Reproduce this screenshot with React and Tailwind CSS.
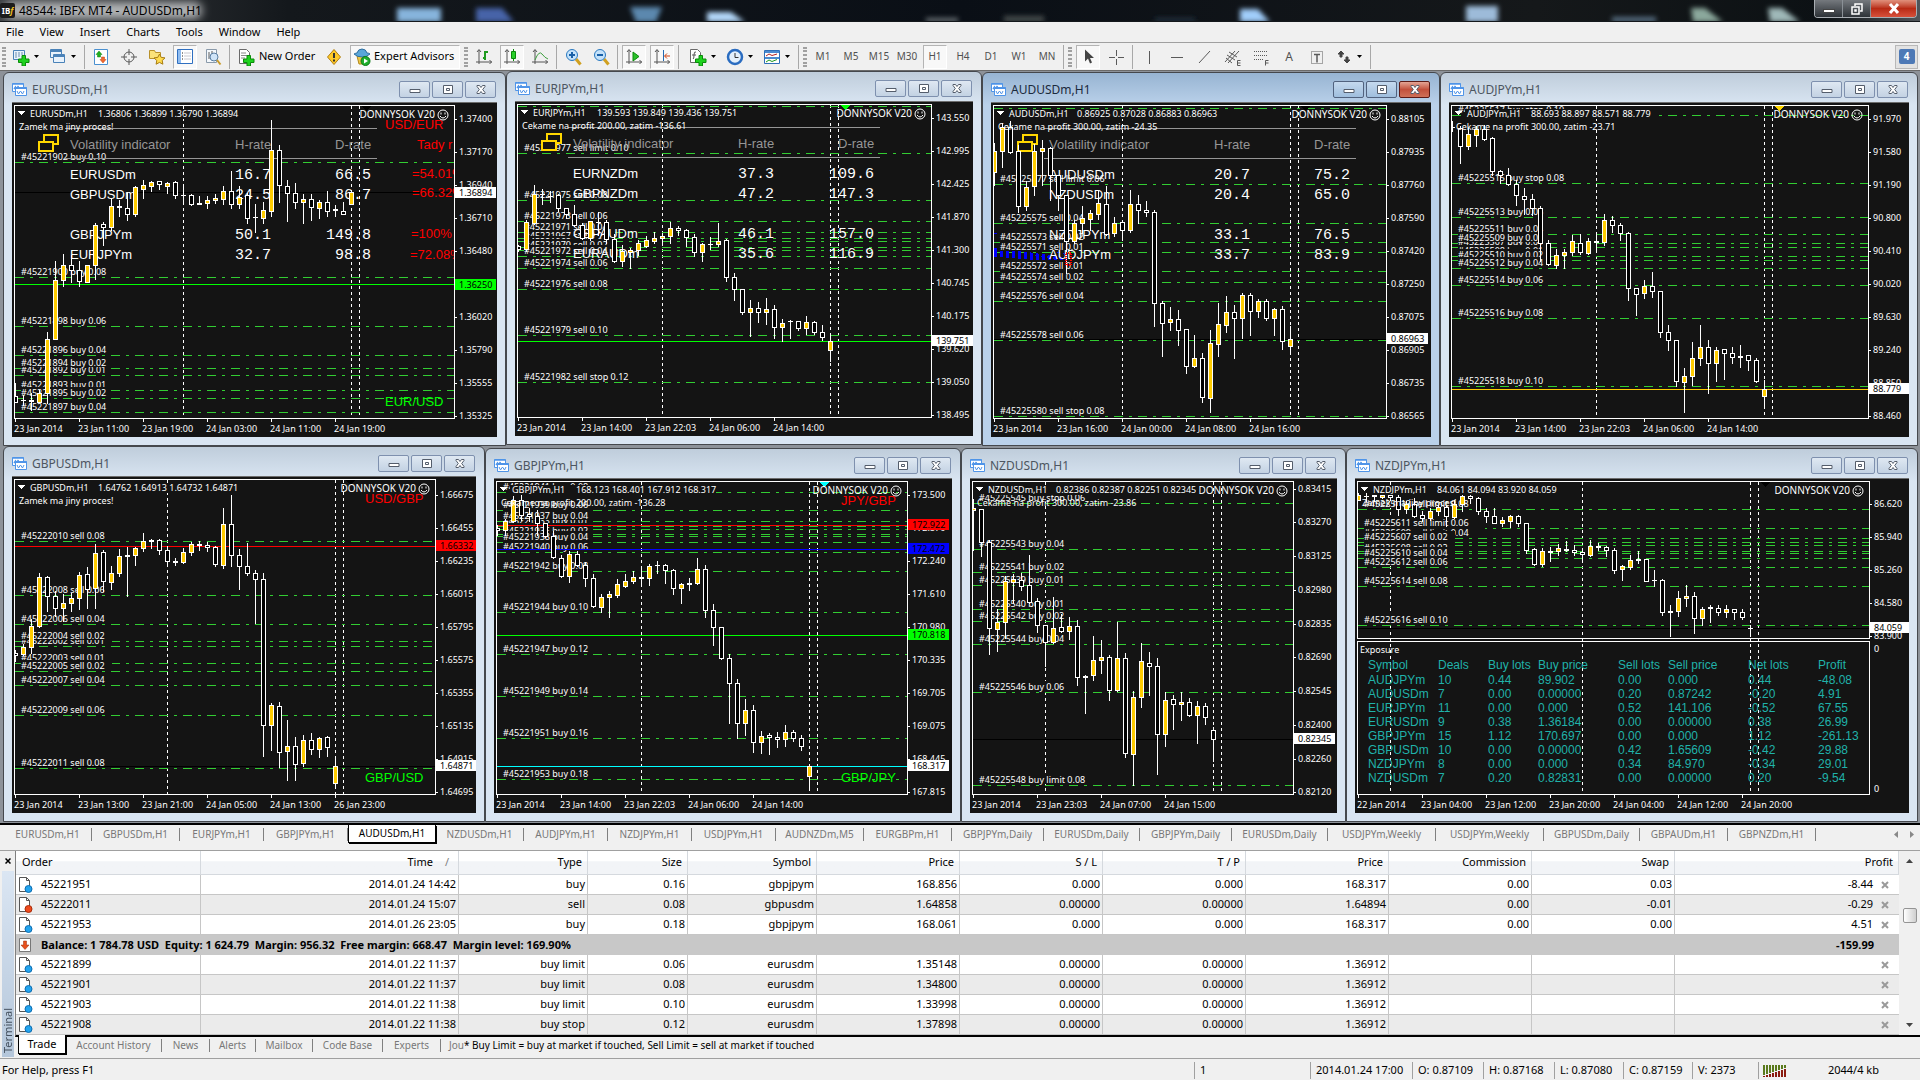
// src/App.jsx
import { useState } from 'react';

const TICKS_PER_PIXEL = 3;
const BAR_STEP = 8;
const FIRST_BAR = 3;

// bars: [high, body top, body bottom, low, rising]
const charts = {
  EURUSD: {
    title: 'EURUSDm,H1',
    quote: '1.36806 1.36899 1.36790 1.36894',
    comment: 'Zamek ma jiny proces!',
    origin: 99, width: 442, bottom: 1048,
    axis: { from: 146, step: 99, labels: ['1.37400', '1.37170', '1.36940', '1.36710', '1.36480', '1.36250', '1.36020', '1.35790', '1.35555', '1.35325'] },
    times: ['23 Jan 2014', '23 Jan 11:00', '23 Jan 19:00', '24 Jan 03:00', '24 Jan 11:00', '24 Jan 19:00'],
    days: [21, 42, 43],
    solid: [[367, '#000000'], [643, '#00ff00']],
    tags: [[366, '1.36894', '#ffffff'], [642, '1.36250', '#00ff00']],
    marker: '#000000',
    levels: [[277, '#45221902 buy 0.10'], [623, '#45221900 buy 0.08'], [769, '#45221898 buy 0.06'], [856, '#45221896 buy 0.04'], [915, '#45221892 buy 0.01'], [895, '#45221894 buy 0.02'], [961, '#45221893 buy 0.01'], [985, '#45221895 buy 0.02'], [1027, '#45221897 buy 0.04']],
    volatility: [['EURUSDm', '16.7', '66.5'], ['GBPUSDm', '24.5', '86.7'], ['GBPJPYm', '50.1', '149.8'], ['EURJPYm', '32.7', '98.8']],
    notes: [
      { x: 373, y: 26, text: 'USD/EUR', color: '#ff0000' },
      { x: 405, y: 46, text: 'Tady r', color: '#ff0000' },
      { x: 400, y: 75, text: '=54.01%', color: '#ff0000' },
      { x: 400, y: 94, text: '=66.32%', color: '#ff0000' },
      { x: 399, y: 135, text: '=100%', color: '#ff0000' },
      { x: 398, y: 156, text: '=72.08%', color: '#ff0000' },
      { x: 373, y: 303, text: 'EUR/USD', color: '#00ff00' },
    ],
    bars: [
      [939, 979, 996, 996, 0], [975, 991, 991, 1005, 0], [970, 991, 993, 1022, 0], [960, 969, 996, 996, 1], [787, 807, 970, 1000, 1],
      [573, 630, 809, 809, 1], [552, 585, 632, 650, 1], [555, 585, 602, 638, 0], [575, 600, 635, 650, 0], [585, 585, 636, 638, 1],
      [459, 465, 586, 627, 1], [457, 462, 472, 525, 0], [386, 408, 473, 480, 1], [390, 410, 411, 440, 0], [368, 415, 434, 452, 0],
      [348, 351, 434, 440, 1], [330, 345, 357, 384, 1], [333, 337, 350, 365, 1], [333, 334, 344, 357, 0], [337, 339, 350, 369, 1],
      [335, 337, 377, 384, 0], [345, 376, 377, 395, 0], [372, 375, 402, 405, 0], [378, 399, 402, 402, 0], [380, 392, 399, 416, 1],
      [372, 385, 392, 399, 1], [350, 363, 387, 402, 1], [303, 364, 404, 414, 0], [348, 382, 404, 416, 1], [370, 377, 446, 461, 0],
      [404, 442, 443, 486, 0], [396, 420, 444, 459, 1], [152, 241, 423, 440, 1], [225, 241, 347, 396, 0], [330, 348, 371, 453, 0],
      [340, 370, 396, 414, 0], [372, 387, 396, 459, 1], [374, 388, 412, 450, 0], [390, 396, 416, 444, 1], [363, 397, 423, 440, 0],
      [405, 418, 422, 438, 0], [396, 423, 432, 432, 0], [363, 366, 404, 404, 1],
    ],
  },
  EURJPY: {
    title: 'EURJPYm,H1',
    quote: '139.593 139.849 139.436 139.751',
    comment: 'Cekame na profit 200.00, zatim -136.61',
    origin: 96, width: 416, bottom: 1045,
    axis: { from: 143, step: 99, labels: ['143.550', '142.995', '142.425', '141.870', '141.300', '140.745', '140.175', '139.620', '139.050', '138.495'] },
    times: ['23 Jan 2014', '23 Jan 14:00', '23 Jan 22:03', '24 Jan 06:00', '24 Jan 14:00'],
    days: [18, 39, 40],
    solid: [[814, '#00ff00']],
    tags: [[812, '139.751', '#ffffff']],
    marker: '#00ff00',
    levels: [[109, ''], [250, '#45221977 sell limit 0.10'], [391, '#45221975 sell 0.08'], [454, '#45221973 sell 0.06'], [505, '#45221969 sell 0.02'], [514, '#45221967 sell 0.01'], [487, '#45221971 sell 0.04'], [532, '#45221968 sell 0.01'], [541, '#45221970 sell 0.02'], [559, '#45221972 sell 0.04'], [595, '#45221974 sell 0.06'], [658, '#45221976 sell 0.08'], [796, '#45221979 sell 0.10'], [937, '#45221982 sell stop 0.12']],
    volatility: [['EURNZDm', '37.3', '109.6'], ['GBPNZDm', '47.2', '147.3'], ['GBPAUDm', '46.1', '157.0'], ['EURAUDm', '35.6', '116.9']],
    bars: [
      [525, 529, 537, 545, 0], [450, 457, 537, 543, 1], [345, 373, 460, 463, 1], [357, 373, 374, 402, 0], [365, 378, 379, 396, 0],
      [372, 375, 415, 423, 0], [414, 415, 432, 446, 0], [405, 432, 467, 470, 0], [460, 467, 505, 508, 0], [453, 454, 505, 510, 1],
      [426, 457, 458, 495, 0], [450, 457, 508, 520, 0], [493, 508, 574, 576, 0], [525, 543, 574, 590, 1], [535, 540, 546, 594, 1],
      [510, 519, 542, 555, 1], [499, 510, 529, 531, 1], [488, 506, 513, 521, 1], [490, 499, 506, 520, 1], [458, 475, 499, 521, 1],
      [470, 475, 482, 495, 0], [478, 480, 503, 528, 0], [492, 502, 547, 560, 0], [520, 522, 547, 573, 1], [503, 523, 524, 537, 0],
      [461, 515, 524, 528, 1], [507, 511, 622, 635, 0], [610, 622, 658, 692, 0], [657, 658, 727, 734, 0], [692, 715, 727, 800, 1],
      [697, 714, 727, 758, 0], [684, 717, 727, 762, 1], [705, 717, 772, 806, 0], [747, 759, 773, 815, 1], [750, 754, 755, 806, 0],
      [753, 754, 776, 782, 0], [738, 757, 775, 792, 1], [754, 757, 788, 792, 0], [765, 786, 803, 810, 0], [795, 813, 842, 873, 1],
    ],
  },
  AUDUSD: {
    title: 'AUDUSDm,H1',
    quote: '0.86925 0.87028 0.86883 0.86963',
    comment: 'Cekame na profit 300.00, zatim -24.35',
    origin: 99, width: 395, bottom: 1048,
    axis: { from: 146, step: 99, labels: ['0.88105', '0.87935', '0.87760', '0.87590', '0.87420', '0.87250', '0.87075', '0.86905', '0.86735', '0.86565'] },
    times: ['23 Jan 2014', '23 Jan 16:00', '24 Jan 00:00', '24 Jan 08:00', '24 Jan 16:00'],
    days: [16, 37, 38],
    solid: [[807, '#000000']],
    tags: [[806, '0.86963', '#ffffff']],
    marker: '#000000',
    trades: true,
    levels: [[115, ''], [343, '#45225577 sell limit 0.06'], [460, '#45225575 sell 0.04'], [517, '#45225573 sell 0.02'], [547, '#45225571 sell 0.01'], [604, '#45225572 sell 0.01'], [637, '#45225574 sell 0.02'], [694, '#45225576 sell 0.04'], [811, '#45225578 sell 0.06'], [1039, '#45225580 sell stop 0.08']],
    volatility: [['AUDUSDm', '20.7', '75.2'], ['NZDUSDm', '20.4', '65.0'], ['NZDJPYm', '33.1', '76.5'], ['AUDJPYm', '33.7', '83.9']],
    bars: [
      [220, 243, 308, 345, 1], [160, 172, 244, 292, 1], [155, 172, 247, 250, 0], [225, 243, 410, 428, 0], [333, 351, 410, 422, 1],
      [222, 243, 350, 375, 1], [210, 236, 245, 345, 1], [233, 236, 317, 390, 0], [315, 316, 375, 420, 0], [375, 376, 515, 610, 0],
      [450, 459, 515, 520, 1], [408, 445, 461, 490, 1], [422, 429, 449, 480, 1], [365, 399, 432, 448, 1], [350, 402, 493, 495, 0],
      [441, 459, 491, 498, 1], [452, 457, 482, 510, 0], [360, 402, 482, 486, 1], [375, 402, 422, 460, 0], [394, 421, 428, 440, 0],
      [420, 427, 701, 768, 0], [694, 700, 761, 858, 0], [711, 748, 758, 782, 1], [720, 748, 781, 825, 0], [777, 778, 890, 909, 0],
      [795, 865, 890, 893, 1], [849, 865, 983, 996, 0], [780, 820, 984, 1026, 1], [699, 763, 822, 860, 1], [678, 727, 765, 786, 1],
      [705, 726, 745, 866, 0], [669, 675, 746, 804, 1], [669, 676, 724, 795, 0], [687, 694, 725, 741, 1], [687, 694, 746, 750, 0],
      [714, 718, 746, 795, 1], [709, 718, 814, 837, 0], [768, 808, 830, 854, 1],
    ],
  },
  AUDJPY: {
    title: 'AUDJPYm,H1',
    quote: '88.693 88.897 88.571 88.779',
    comment: 'Cekame na profit 300.00, zatim -23.71',
    origin: 99, width: 419, bottom: 1048,
    axis: { from: 146, step: 99, labels: ['91.970', '91.580', '91.190', '90.800', '90.410', '90.020', '89.630', '89.240', '88.850', '88.460'] },
    times: ['23 Jan 2014', '23 Jan 14:00', '23 Jan 22:03', '24 Jan 06:00', '24 Jan 14:00'],
    days: [18, 39, 40],
    solid: [[958, '#ffcc00']],
    tags: [[956, '88.779', '#ffffff']],
    marker: '#ffd700',
    levels: [[137, '#45225517 buy stop 0.10'], [340, '#45225515 buy stop 0.08'], [442, '#45225513 buy 0.06'], [493, '#45225511 buy 0.04'], [532, '#45225507 buy 0.01'], [520, '#45225509 buy 0.02'], [559, '#45225508 buy 0.01'], [571, '#45225510 buy 0.02'], [595, '#45225512 buy 0.04'], [646, '#45225514 buy 0.06'], [745, '#45225516 buy 0.08'], [949, '#45225518 buy 0.10']],
    bars: [
      [155, 172, 173, 185, 0], [168, 175, 230, 279, 0], [175, 192, 230, 239, 1], [170, 178, 197, 228, 1], [165, 178, 208, 210, 0],
      [201, 205, 305, 315, 0], [300, 304, 317, 341, 0], [294, 316, 343, 345, 0], [332, 343, 377, 407, 0], [354, 379, 388, 432, 0],
      [372, 388, 416, 437, 0], [410, 415, 521, 575, 0], [510, 519, 584, 587, 0], [537, 556, 587, 594, 1], [538, 547, 557, 594, 1],
      [495, 513, 548, 555, 1], [492, 520, 548, 552, 0], [505, 513, 550, 552, 1], [487, 515, 518, 545, 0], [432, 450, 518, 525, 1],
      [440, 451, 467, 488, 0], [460, 465, 491, 512, 0], [486, 490, 656, 690, 0], [654, 655, 674, 735, 0], [630, 649, 671, 684, 1],
      [606, 650, 665, 681, 0], [663, 664, 788, 803, 0], [765, 788, 812, 840, 0], [810, 811, 935, 948, 0], [895, 919, 937, 1026, 1],
      [816, 865, 920, 946, 1], [765, 832, 866, 885, 1], [810, 832, 881, 969, 0], [832, 841, 881, 933, 1], [837, 838, 850, 927, 0],
      [832, 850, 863, 879, 0], [825, 860, 862, 891, 0], [856, 857, 871, 900, 0], [864, 871, 934, 936, 0], [930, 958, 980, 1014, 1],
    ],
  },
  GBPUSD: {
    title: 'GBPUSDm,H1',
    quote: '1.64762 1.64913 1.64732 1.64871',
    comment: 'Zamek ma jiny proces!',
    origin: 96, width: 423, bottom: 1051,
    axis: { from: 149, step: 99, labels: ['1.66675', '1.66455', '1.66235', '1.66015', '1.65795', '1.65575', '1.65355', '1.65135', '1.64915', '1.64695'] },
    times: ['23 Jan 2014', '23 Jan 13:00', '23 Jan 21:00', '24 Jan 05:00', '24 Jan 13:00', '26 Jan 23:00'],
    days: [19, 40, 41],
    solid: [[304, '#ff0000'], [965, '#000000']],
    tags: [[302, '1.66332', '#ff0000'], [962, '1.64871', '#ffffff']],
    marker: '#000000',
    levels: [[289, '#45222010 sell 0.08'], [451, '#45222008 sell 0.06'], [538, '#45222006 sell 0.04'], [604, '#45222002 sell 0.01'], [589, '#45222004 sell 0.02'], [655, '#45222003 sell 0.01'], [679, '#45222005 sell 0.02'], [721, '#45222007 sell 0.04'], [811, '#45222009 sell 0.06'], [970, '#45222011 sell 0.08']],
    notes: [
      { x: 353, y: 26, text: 'USD/GBP', color: '#ff0000' },
      { x: 353, y: 305, text: 'GBP/USD', color: '#00ff00' },
    ],
    bars: [
      [615, 625, 632, 650, 0], [597, 607, 628, 632, 1], [522, 543, 608, 625, 1], [384, 397, 545, 548, 1], [393, 396, 455, 498, 0],
      [438, 455, 491, 513, 0], [447, 475, 491, 530, 1], [444, 460, 475, 498, 1], [381, 391, 461, 492, 1], [366, 388, 433, 489, 0],
      [297, 325, 431, 489, 1], [316, 321, 410, 440, 0], [363, 385, 411, 434, 1], [312, 334, 386, 395, 1], [306, 331, 334, 453, 0],
      [308, 309, 332, 360, 1], [264, 289, 311, 318, 1], [282, 287, 290, 309, 0], [284, 286, 317, 327, 0], [305, 316, 350, 360, 0],
      [340, 350, 352, 362, 0], [310, 322, 353, 356, 1], [291, 297, 323, 332, 1], [290, 299, 301, 315, 0], [291, 301, 307, 320, 0],
      [303, 307, 359, 365, 0], [189, 238, 360, 369, 1], [150, 238, 332, 365, 0], [312, 331, 365, 432, 0], [294, 364, 386, 390, 0],
      [376, 384, 404, 534, 0], [384, 403, 842, 933, 0], [775, 781, 842, 915, 1], [771, 784, 922, 966, 0], [825, 904, 920, 1005, 1],
      [876, 904, 957, 1005, 0], [870, 885, 956, 963, 1], [864, 885, 914, 927, 0], [877, 880, 914, 936, 1], [873, 877, 908, 933, 0],
      [942, 963, 1014, 1028, 1],
    ],
  },
  GBPJPY: {
    title: 'GBPJPYm,H1',
    quote: '168.123 168.401 167.912 168.317',
    comment: 'Cekame na profit 200.00, zatim -136.28',
    origin: 102, width: 413, bottom: 1051,
    axis: { from: 149, step: 99, labels: ['173.500', '172.870', '172.240', '171.610', '170.980', '170.335', '169.705', '169.075', '168.445', '167.815'] },
    times: ['23 Jan 2014', '23 Jan 14:00', '23 Jan 22:03', '24 Jan 06:00', '24 Jan 14:00'],
    days: [18, 39, 40],
    solid: [[241, '#ff0000'], [314, '#0000ff'], [571, '#00ff00'], [964, '#00ffff']],
    tags: [[239, '172.922', '#ff0000'], [311, '172.472', '#0000ff'], [569, '170.818', '#00ff00'], [962, '168.317', '#ffffff']],
    marker: '#00ffff',
    levels: [[142, '#45221941 buy 0.08'], [196, '#45221939 buy 0.06'], [253, '#45221935 buy 0.02'], [244, '#45221933 buy 0.01'], [229, '#45221937 buy 0.04'], [268, '#45221934 buy 0.01'], [274, '#45221936 buy 0.02'], [292, '#45221938 buy 0.04'], [322, '#45221940 buy 0.06'], [379, '#45221942 buy 0.08'], [502, '#45221944 buy 0.10'], [628, '#45221947 buy 0.12'], [754, '#45221949 buy 0.14'], [880, '#45221951 buy 0.16'], [1003, '#45221953 buy 0.18']],
    notes: [
      { x: 347, y: 26, text: 'JPY/GBP', color: '#ff0000' },
      { x: 347, y: 303, text: 'GBP/JPY', color: '#00ff00' },
    ],
    bars: [
      [240, 249, 256, 272, 0], [222, 229, 257, 270, 1], [155, 167, 230, 233, 1], [150, 167, 210, 225, 0], [190, 209, 215, 230, 0],
      [195, 213, 236, 270, 0], [234, 235, 274, 276, 0], [259, 274, 338, 340, 0], [330, 340, 395, 397, 0], [320, 328, 395, 413, 1],
      [320, 328, 361, 364, 0], [352, 360, 401, 425, 0], [387, 400, 485, 487, 0], [447, 457, 487, 501, 1], [438, 448, 458, 516, 1],
      [402, 418, 450, 458, 1], [387, 408, 425, 428, 1], [378, 397, 408, 416, 1], [363, 398, 401, 420, 0], [357, 363, 401, 422, 1],
      [350, 361, 362, 384, 0], [358, 361, 376, 414, 0], [373, 376, 430, 447, 0], [414, 418, 431, 474, 1], [399, 415, 417, 435, 0],
      [339, 373, 416, 419, 1], [360, 374, 497, 518, 0], [477, 496, 547, 600, 0], [546, 547, 641, 644, 0], [627, 640, 716, 834, 0],
      [702, 715, 836, 881, 0], [762, 796, 836, 870, 1], [780, 796, 893, 923, 0], [858, 873, 893, 924, 1], [864, 871, 878, 927, 0],
      [862, 877, 884, 906, 0], [840, 862, 884, 903, 1], [856, 862, 880, 890, 0], [870, 880, 905, 917, 0], [962, 963, 995, 1035, 1],
    ],
  },
  NZDUSD: {
    title: 'NZDUSDm,H1',
    quote: '0.82386 0.82387 0.82251 0.82345',
    comment: 'Cekame na profit 300.00, zatim -23.86',
    origin: 102, width: 323, bottom: 1051,
    axis: { from: 129, step: 101.3, labels: ['0.83415', '0.83270', '0.83125', '0.82980', '0.82835', '0.82690', '0.82545', '0.82400', '0.82260', '0.82120'] },
    times: ['23 Jan 2014', '23 Jan 23:03', '24 Jan 07:00', '24 Jan 15:00'],
    days: [9, 30, 31],
    solid: [[884, '#000000']],
    tags: [[881, '0.82345', '#ffffff']],
    marker: '#000000',
    levels: [[175, '#45225545 buy stop 0.06'], [313, '#45225543 buy 0.04'], [382, '#45225541 buy 0.02'], [421, '#45225539 buy 0.01'], [493, '#45225540 buy 0.01'], [529, '#45225542 buy 0.02'], [598, '#45225544 buy 0.04'], [742, '#45225546 buy 0.06'], [1021, '#45225548 buy limit 0.08']],
    bars: [
      [162, 190, 197, 317, 1], [192, 193, 293, 335, 0], [285, 292, 551, 627, 0], [492, 531, 554, 620, 1], [395, 409, 533, 580, 1],
      [388, 404, 412, 475, 1], [384, 405, 425, 437, 0], [330, 420, 472, 476, 0], [459, 468, 542, 563, 0], [540, 541, 593, 663, 0],
      [456, 549, 593, 595, 1], [507, 548, 559, 562, 0], [516, 544, 559, 582, 1], [525, 543, 698, 720, 0], [690, 694, 697, 806, 0],
      [573, 645, 692, 705, 1], [585, 637, 647, 686, 1], [630, 636, 737, 765, 0], [531, 640, 735, 738, 1], [624, 639, 926, 936, 0],
      [738, 756, 929, 1021, 1], [594, 648, 758, 786, 1], [621, 654, 665, 750, 0], [639, 663, 869, 987, 0], [741, 766, 869, 903, 1],
      [750, 763, 779, 852, 0], [741, 771, 779, 825, 1], [759, 771, 812, 813, 0], [768, 783, 812, 894, 1], [774, 783, 818, 837, 0],
      [847, 856, 884, 950, 0],
    ],
  },
  NZDJPY: {
    title: 'NZDJPYm,H1',
    quote: '84.061 84.094 83.920 84.059',
    comment: 'Zamek ma jiny proces!',
    origin: 102, width: 514, bottom: 1051, split: 583,
    axis: { from: 176, step: 99, labels: ['86.620', '85.940', '85.260', '84.580', '83.900'] },
    times: ['22 Jan 2014', '23 Jan 04:00', '23 Jan 12:00', '23 Jan 20:00', '24 Jan 04:00', '24 Jan 12:00', '24 Jan 20:00'],
    days: [4, 28, 49, 50],
    solid: [[550, '#000000']],
    tags: [[548, '84.059', '#ffffff']],
    marker: '#000000',
    levels: [[193, '#45225613 sell limit 0.08'], [280, '#45225609 sell limit 0.04'], [250, '#45225611 sell limit 0.06'], [301, '#45225605 sell 0.01'], [292, '#45225607 sell 0.02'], [319, '#45225606 sell 0.01'], [325, '#45225608 sell 0.02'], [340, '#45225610 sell 0.04'], [367, '#45225612 sell 0.06'], [424, '#45225614 sell 0.08'], [541, '#45225616 sell 0.10']],
    bars: [
      [145, 150, 167, 167, 1], [145, 153, 155, 170, 0], [148, 152, 154, 168, 0], [147, 150, 157, 160, 1], [143, 152, 156, 165, 0],
      [150, 156, 194, 210, 0], [168, 178, 193, 205, 1], [160, 178, 213, 218, 0], [200, 211, 220, 228, 0], [190, 199, 221, 225, 1],
      [180, 187, 200, 210, 1], [183, 187, 215, 245, 0], [165, 178, 217, 220, 1], [150, 154, 178, 198, 1], [147, 153, 161, 175, 0],
      [158, 160, 200, 208, 0], [190, 199, 215, 231, 0], [190, 214, 234, 235, 0], [216, 226, 234, 243, 1], [210, 213, 228, 246, 1],
      [212, 214, 236, 244, 0], [234, 235, 315, 325, 0], [310, 313, 359, 360, 0], [309, 318, 359, 363, 1], [308, 320, 321, 348, 0],
      [297, 310, 318, 330, 1], [288, 313, 317, 320, 0], [300, 316, 323, 330, 0], [320, 322, 329, 345, 0], [285, 303, 330, 335, 1],
      [294, 304, 307, 315, 0], [305, 307, 317, 333, 0], [310, 316, 375, 384, 0], [360, 364, 374, 405, 1], [330, 345, 366, 372, 1],
      [318, 343, 345, 355, 0], [342, 343, 408, 410, 0], [375, 406, 407, 425, 0], [402, 405, 503, 510, 0], [480, 499, 503, 573, 0],
      [438, 460, 500, 513, 1], [420, 453, 461, 483, 1], [441, 453, 521, 564, 0], [486, 492, 521, 540, 1], [482, 487, 490, 531, 0],
      [480, 490, 502, 510, 0], [480, 493, 502, 516, 1], [492, 493, 502, 524, 0], [492, 502, 517, 524, 0], [540, 550, 551, 573, 0],
    ],
  },
};

const exposure = [
  ['AUDJPYm', '10', '0.44', '89.902', '0.00', '0.000', '0.44', '-48.08'],
  ['AUDUSDm', '7', '0.00', '0.00000', '0.20', '0.87242', '-0.20', '4.91'],
  ['EURJPYm', '11', '0.00', '0.000', '0.52', '141.106', '-0.52', '67.55'],
  ['EURUSDm', '9', '0.38', '1.36184', '0.00', '0.00000', '0.38', '26.99'],
  ['GBPJPYm', '15', '1.12', '170.697', '0.00', '0.000', '1.12', '-261.13'],
  ['GBPUSDm', '10', '0.00', '0.00000', '0.42', '1.65609', '-0.42', '29.88'],
  ['NZDJPYm', '8', '0.00', '0.000', '0.34', '84.970', '-0.34', '29.01'],
  ['NZDUSDm', '7', '0.20', '0.82831', '0.00', '0.00000', '0.20', '-9.54'],
];

const chartTabs = [
  ['EURUSDm,H1', 'w-[88px]'], ['GBPUSDm,H1', 'w-[88px]'], ['EURJPYm,H1', 'w-[84px]'], ['GBPJPYm,H1', 'w-[84px]'],
  ['AUDUSDm,H1', 'w-[88px]'], ['NZDUSDm,H1', 'w-[88px]'], ['AUDJPYm,H1', 'w-[84px]'], ['NZDJPYm,H1', 'w-[84px]'],
  ['USDJPYm,H1', 'w-[84px]'], ['AUDNZDm,M5', 'w-[88px]'], ['EURGBPm,H1', 'w-[88px]'], ['GBPJPYm,Daily', 'w-[92px]'],
  ['EURUSDm,Daily', 'w-[96px]'], ['GBPJPYm,Daily', 'w-[92px]'], ['EURUSDm,Daily', 'w-[96px]'], ['USDJPYm,Weekly', 'w-[108px]'],
  ['USDJPYm,Weekly', 'w-[108px]'], ['GBPUSDm,Daily', 'w-[96px]'], ['GBPAUDm,H1', 'w-[88px]'], ['GBPNZDm,H1', 'w-[88px]'],
];

const columns = [
  ['Order', 'w-[185px]'], ['Time', 'w-[258px]'], ['Type', 'w-[129px]'], ['Size', 'w-[100px]'], ['Symbol', 'w-[129px]'], ['Price', 'w-[143px]'],
  ['S / L', 'w-[143px]'], ['T / P', 'w-[143px]'], ['Price', 'w-[143px]'], ['Commission', 'w-[143px]'], ['Swap', 'w-[143px]'], ['Profit', ''],
];

const openOrders = [
  ['45221951', '2014.01.24 14:42', 'buy', '0.16', 'gbpjpym', '168.856', '0.000', '0.000', '168.317', '0.00', '0.03', '-8.44'],
  ['45222011', '2014.01.24 15:07', 'sell', '0.08', 'gbpusdm', '1.64858', '0.00000', '0.00000', '1.64894', '0.00', '-0.01', '-0.29'],
  ['45221953', '2014.01.26 23:05', 'buy', '0.18', 'gbpjpym', '168.061', '0.000', '0.000', '168.317', '0.00', '0.00', '4.51'],
];

const pendingOrders = [
  ['45221899', '2014.01.22 11:37', 'buy limit', '0.06', 'eurusdm', '1.35148', '0.00000', '0.00000', '1.36912', '', '', ''],
  ['45221901', '2014.01.22 11:37', 'buy limit', '0.08', 'eurusdm', '1.34800', '0.00000', '0.00000', '1.36912', '', '', ''],
  ['45221903', '2014.01.22 11:38', 'buy limit', '0.10', 'eurusdm', '1.33998', '0.00000', '0.00000', '1.36912', '', '', ''],
  ['45221908', '2014.01.22 11:38', 'buy stop', '0.12', 'eurusdm', '1.37898', '0.00000', '0.00000', '1.36912', '', '', ''],
];

const Candle = ({ x, high, top, bottom, low, rising }) => (
  <g>
    <rect x={x} y={high} width="1" height={low - high + 1} fill="#fff" />
    <rect x={x - 2} y={top} width="5" height={bottom - top + 1} fill="#fff" />
    {bottom - top > 1 && (
      <rect x={x - 1} y={top + 1} width="3" height={bottom - top - 1} fill={rising ? '#ffcc00' : '#000'} />
    )}
  </g>
);

const Volatility = ({ rows }) => (
  <g className="text-[13px]">
    <g className="fill-[#969696]">
      <rect x="53" y="25" width="312" height="1" />
      <rect x="53" y="55" width="312" height="1" />
      <text x="58" y="46">Volatility indicator</text>
      <text x="223" y="46">H-rate</text>
      <text x="323" y="46">D-rate</text>
    </g>
    <g fill="none" stroke="#ffd700" strokeWidth="2">
      <rect x="32" y="32" width="14" height="9" />
      <rect x="27" y="39" width="14" height="9" fill="#141414" />
    </g>
    {rows.map(([name, hourly, daily], i) => {
      const y = [76, 96, 136, 156][i];
      return (
        <g key={name} className="fill-white">
          <text x="58" y={y}>{name}</text>
          <text x="259" y={y} textAnchor="end" className="font-['Liberation_Mono',monospace] text-[15px]">{hourly}</text>
          <text x="359" y={y} textAnchor="end" className="font-['Liberation_Mono',monospace] text-[15px]">{daily}</text>
        </g>
      );
    })}
  </g>
);

const Chart = ({ chart }) => {
  const { width, axis } = chart;
  const toPixel = (tick) => Math.floor((tick - chart.origin) / TICKS_PER_PIXEL);
  const barX = (index) => FIRST_BAR + index * BAR_STEP;
  const bottom = toPixel(chart.bottom);
  const split = chart.split ? toPixel(chart.split) : bottom;
  const lastDay = barX(chart.days[chart.days.length - 1]);
  const quoteX = chart.title.includes('JPY') ? 82 : 86;
  const clipId = `clip-${chart.title.slice(0, 6)}`;

  return (
    <svg className="block h-full w-full fill-white font-['Liberation_Sans',Arial,sans-serif]" role="img" aria-label={chart.title} shapeRendering="crispEdges">
      <clipPath id={clipId}>
        <rect x="2" y="2" width={width - 2} height={bottom} />
      </clipPath>
      <g clipPath={`url(#${clipId})`}>
        {chart.days.map((day) => (
          <line key={day} x1={barX(day) + 0.5} x2={barX(day) + 0.5} y1="3" y2={bottom} stroke="#fff" strokeDasharray="3 3" />
        ))}
        {chart.levels.map(([tick]) => (
          <line key={tick} x1="3" x2={width} y1={toPixel(tick) + 0.5} y2={toPixel(tick) + 0.5} stroke="#32cd32" strokeDasharray="9 6 3 6" />
        ))}
        {chart.trades && (
          <g stroke="#0000ff" fill="none">
            <path d="M3 130 L76 152" strokeDasharray="3 3" />
            <path d="M3 146 L76 156 M3 149 L76 157 M3 152 L76 158" strokeWidth="3" strokeDasharray="3 3" />
          </g>
        )}
        {chart.levels.filter(([, label]) => label).map(([tick, label]) => (
          <g key={label}>
            <rect x="9" y={toPixel(tick) - 11} width={label.length * 5 - 4} height="10" fill="#141414" />
            <text x="9" y={toPixel(tick) - 2} className="font-['Noto_Sans',sans-serif] text-[9px]">{label}</text>
          </g>
        ))}
        {chart.solid.map(([tick, color]) => (
          <rect key={tick} x="2" y={toPixel(tick)} width={width - 2} height="1" fill={color} />
        ))}
        {chart.volatility && <Volatility rows={chart.volatility} />}
        {chart.bars.map(([high, top, low, end, rising], i) => (
          <Candle key={i} x={barX(i)} high={toPixel(high)} top={toPixel(top)} bottom={toPixel(low)} low={toPixel(end)} rising={rising} />
        ))}
        {chart.trades && <path d="M75 150h5v12h-5z" fill="none" stroke="#ff0000" strokeWidth="2" strokeDasharray="1 1" />}
        {(chart.notes || []).map((note) => (
          <text key={note.text} x={note.x} y={note.y} fill={note.color} className="text-[13px]">{note.text}</text>
        ))}
      </g>

      {/* Frame, split panel and header */}
      <g fill="none" stroke="#fff">
        <rect x="2.5" y="2.5" width={width - 2} height={split - 3} />
        {chart.split && <rect x="2.5" y={split + 2.5} width={width - 2} height={bottom - split - 3} />}
      </g>
      <path d={`M${lastDay + 3} 3h9l-4.5 5z`} fill={chart.marker} />
      <rect x="16" y="6" width={quoteX - 16 + Math.round(chart.quote.length * 4.5)} height="10" fill="#141414" />
      <path d="M6 8h7l-3.500 4z" />
      <g className="font-['Noto_Sans',sans-serif] text-[9px]">
        <text x="18" y="14">{chart.title}</text>
        <text x={quoteX} y="14">{chart.quote}</text>
        <text x="7" y="27">{chart.comment}</text>
        <text x={width - 19} y="15" textAnchor="end" className="text-[10px]">DONNYSOK V20</text>
      </g>
      <g fill="none" stroke="#fff" shapeRendering="geometricPrecision">
        <circle cx={width - 11} cy="12" r="5" />
        <path d={`M${width - 14} 13q3 4 6 0M${width - 13} 9.500v2M${width - 9} 9.500v2`} />
      </g>

      {/* Price axis */}
      <g className="font-['Noto_Sans',sans-serif] text-[9px]">
        {axis.labels.map((label, i) => {
          const y = toPixel(axis.from + axis.step * i);
          return (
            <g key={label}>
              <rect x={width} y={y + 1} width="3" height="1" />
              <text x={width + 5} y={y + 4}>{label}</text>
            </g>
          );
        })}
        {chart.split && <text x={width + 5} y={split + 13}>0</text>}
        {chart.split && <text x={width + 5} y={bottom - 3}>0</text>}
        {chart.tags.map(([tick, label, color]) => (
          <g key={label}>
            <rect x={width + 1} y={toPixel(tick) - 5} width="41" height="11" fill={color} />
            <text x={width + 5} y={toPixel(tick) + 4} className="fill-black">{label}</text>
          </g>
        ))}
        {chart.times.map((time, i) => (
          <g key={time}>
            <rect x={barX(i * 8)} y={bottom} width="1" height="3" />
            <text x={barX(i * 8) - 1} y={bottom + 13}>{time}</text>
          </g>
        ))}
      </g>
    </svg>
  );
};

const ExposureTable = () => (
  <div className="absolute top-[164px] left-[4px] font-['Liberation_Sans',Arial,sans-serif] text-[12px] leading-[14px] text-[#20b2aa]">
    <div className="pl-px font-['Noto_Sans',sans-serif] text-[9px] text-white">Exposure</div>
    <table className="mt-px ml-[9px] table-fixed border-collapse text-left">
      <colgroup>
        <col className="w-[70px]" />
        <col className="w-[50px]" />
        <col className="w-[50px]" />
        <col className="w-[80px]" />
        <col className="w-[50px]" />
        <col className="w-[80px]" />
        <col className="w-[70px]" />
        <col className="w-[48px]" />
      </colgroup>
      <thead>
        <tr>
          {['Symbol', 'Deals', 'Buy lots', 'Buy price', 'Sell lots', 'Sell price', 'Net lots', 'Profit'].map((name) => (
            <th key={name} className="p-0 pb-px font-normal whitespace-nowrap">{name}</th>
          ))}
        </tr>
      </thead>
      <tbody>
        {exposure.map((row) => (
          <tr key={row[0]}>
            {row.map((cell, i) => (
              <td key={i} className="p-0 whitespace-nowrap">{cell}</td>
            ))}
          </tr>
        ))}
      </tbody>
    </table>
  </div>
);

const WindowIcon = () => (
  <svg width="15" height="15" viewBox="0 0 15 15" fill="#fff" stroke="#4f94e8">
    <path d="M.5 1.500h11v8H.5z" />
    <path d="M.5 2h11M2 7l1.500-2 1 2 2-3" strokeWidth="1.500" />
    <path d="M3.500 5.500h11v8h-11z" />
    <path d="M3.500 6h11" strokeWidth="2" />
    <path d="M5 9l1.500 3 2-3 2 3 1.500-3" fill="none" />
  </svg>
);

const frameButton = 'flex h-[17px] w-[31px] items-center justify-center rounded-[2px] border border-[#7e90ae] bg-linear-to-b from-[#dfe8f2] to-[#c3d2e3]';
const frameButtonActive = 'flex h-[17px] w-[31px] items-center justify-center rounded-[2px] border border-[#51627e] bg-linear-to-b from-[#c5d9ee] to-[#9fbedd]';
const closeButtonActive = 'flex h-[17px] w-[31px] items-center justify-center rounded-[2px] border border-[#5c1a16] bg-linear-to-b from-[#e3a495] via-[#c2503c] to-[#cf7058]';

const ChartWindow = ({ chart, active, className, children }) => (
  <section
    className={`flex min-w-0 flex-col overflow-hidden rounded-t-[6px] border border-[#45484d] px-2 pb-2 ${
      active ? 'bg-linear-to-b from-[#97b4d2] to-[#bad1ea] to-[32px]' : 'bg-linear-to-b from-[#bfcddb] to-[#d9e5f2] to-[32px]'
    } ${className}`}
  >
    <header className="flex h-[29px] flex-none items-center gap-1 pt-1 pr-px">
      <WindowIcon />
      <h2 className={`flex-1 pl-px text-[12px] ${active ? 'text-[#1b2a3c]' : 'text-[#4d5661]'}`}>{chart.title}</h2>
      <div className="flex gap-[2px]">
        <button className={active ? frameButtonActive : frameButton} aria-label="Minimize">
          <svg width="12" height="9" viewBox="0 0 12 9"><path d="M1 4.500h10v3H1z" fill="#fff" stroke="#545d6b" /></svg>
        </button>
        <button className={active ? frameButtonActive : frameButton} aria-label="Maximize">
          <svg width="12" height="9" viewBox="0 0 12 9"><path d="M1.500 .5h9v8h-9zM4.500 3.500h3v2h-3z" fill="#fff" stroke="#545d6b" /></svg>
        </button>
        <button className={active ? closeButtonActive : frameButton} aria-label="Close">
          <svg width="12" height="9" viewBox="0 0 12 9"><path d="M2 .5h2.500L6 2.500 7.500.5H10v1L7.700 4.500 10 7.500v1H7.500L6 6.500 4.500 8.500H2v-1l2.300-3L2 1.500z" fill="#fff" stroke="#545d6b" /></svg>
        </button>
      </div>
    </header>
    <div className="relative min-h-0 flex-1 overflow-hidden border-t border-[#6d6d6d] bg-[#141414]">
      <Chart chart={chart} />
      {children}
    </div>
  </section>
);

const Sep = () => <span className="mx-[2px] h-6 w-px flex-none bg-[#a8a8a8]" />;
const Grip = () => <span className="mx-[2px] h-5 w-[4px] flex-none border-x-2 border-dotted border-[#a0a0a0]" />;
const Caret = () => <svg className="flex-none" width="5" height="3" viewBox="0 0 5 3"><path d="M0 0h5L2.500 3z" /></svg>;

const pressed = 'flex h-6 w-[24px] mx-[2px] flex-none items-center justify-center border border-[#b4b4b4] border-r-white border-b-white bg-[#f8f8f8]';
const flat = 'flex h-6 w-[24px] mx-[2px] flex-none items-center justify-center';

const Tool = ({ on, label, children }) => (
  <button className={on ? pressed : flat} aria-label={label} aria-pressed={!!on}>
    <svg width="18" height="18" viewBox="0 0 18 18" fill="none" stroke="#5a5a5a">{children}</svg>
  </button>
);

const MenuTool = ({ label, children }) => (
  <button className="flex h-6 w-[37px] flex-none items-center gap-1 pl-1" aria-label={label}>
    <svg width="18" height="18" viewBox="0 0 18 18" fill="none" stroke="#5a5a5a">{children}</svg>
    <Caret />
  </button>
);

const plus = <path d="M10 7.500h3.500v3.500H17v3.500h-3.500V18H10v-3.500H6.500V11H10z" fill="#1fd21f" stroke="#0a8a0a" />;
const axes = <path d="M4 2v14M1 14h16M2 4l2-2.500L6 4M14.500 12l2 2-2 2" stroke="#555" />;

const Toolbar = () => (
  <div className="flex h-7 items-center overflow-hidden border-t border-[#a0a0a0] bg-[#f0f0f0] text-[11px]">
    <Grip />
    <MenuTool label="New chart">
      <path d="M1.500 2.500h11v9h-11z" fill="#e8f2fc" stroke="#4a82b8" />
      <path d="M4 4v6M7 4v5M10 4v3" stroke="#6b8cae" />
      {plus}
    </MenuTool>
    <MenuTool label="Profiles">
      <path d="M1.500 1.500h11v8h-11z" fill="#e8f2fc" stroke="#4a82b8" />
      <path d="M4.500 6.500h11v8h-11z" fill="#e8f2fc" stroke="#4a82b8" />
      <path d="M2 3h10M5 8h10" stroke="#4a82b8" strokeWidth="2" />
    </MenuTool>
    <Sep />
    <Tool label="Market watch">
      <path d="M2.500 1.500h13v15h-13z" fill="#fff" stroke="#4a90d0" />
      <path d="M7 3l3 3.500H8.500V9h-3V6.500H4z" fill="#1faf1f" stroke="#148014" strokeWidth=".5" />
      <path d="M11 15l3-3.500h-1.500V9h-3v2.500H8z" fill="#f06a30" stroke="#c04010" strokeWidth=".5" />
    </Tool>
    <Tool label="Data window">
      <circle cx="9" cy="9" r="5" />
      <path d="M9 1v6M9 11v6M1 9h6M11 9h6" />
    </Tool>
    <Tool label="Favorites">
      <path d="M1.500 2.500h5l1 2h5v6h-11z" fill="#fbe27a" stroke="#b8912a" />
      <path d="M11.500 6l1.700 3.400 3.800.5-2.800 2.600.7 3.700-3.400-1.800-3.400 1.800.7-3.700L6 9.900l3.800-.5z" fill="#ffdc50" stroke="#a87c10" />
    </Tool>
    <Tool on label="Navigator">
      <path d="M1.500 1.500h15v14h-15z" fill="#fff" stroke="#2f6fc0" />
      <path d="M2 2h3v13H2z" fill="#8fbcf0" stroke="none" />
      <path d="M8 5h7M8 8h7M8 11h7" stroke="#c8c8d0" />
      <path d="M6 5h1M6 8h1M6 11h1" stroke="#222" />
    </Tool>
    <Tool label="Strategy tester">
      <path d="M2.500 1.500h10v13h-10z" fill="#f4f8fc" stroke="#8a9aaa" />
      <path d="M5 4v7M8 3v5" />
      <circle cx="10" cy="9" r="4" fill="#cfe4f8" stroke="#5a7ea2" />
      <path d="M13 12l3.500 4.500" stroke="#c79a2a" strokeWidth="2" />
    </Tool>
    <Sep />
    <button className="flex h-6 w-[88px] flex-none items-center gap-1 pl-[5px] whitespace-nowrap">
      <svg width="18" height="18" viewBox="0 0 18 18" fill="none">
        <path d="M2.500 1.500h7l3 3v11h-10z" fill="#fff" stroke="#6a6a6a" />
        <path d="M4 5h5M4 7.500h6M4 10h4" stroke="#888" />
        {plus}
      </svg>
      New Order
    </button>
    <Tool label="Warnings">
      <path d="M9 1.500L15.500 9 9 16.500 2.500 9z" fill="#ffc928" stroke="#b07d10" />
      <path d="M9 5v5M9 11.500v2" stroke="#333" strokeWidth="2" />
    </Tool>
    <button className="mx-[2px] flex h-6 w-[110px] flex-none items-center gap-[3px] border border-[#b4b4b4] border-r-white border-b-white bg-[#f8f8f8] pl-[2px] whitespace-nowrap" aria-pressed="true">
      <svg className="flex-none" width="18" height="18" viewBox="0 0 18 18">
        <path d="M4 8h9l-2 8H6z" fill="#f0c848" stroke="#b08818" />
        <path d="M1 6q2-1 3-1 1-4 5-4t5 4q2 0 3 1-3 3-8 3T1 6z" fill="#5aa6d8" stroke="#2f6e9e" />
        <circle cx="12.500" cy="13" r="4.500" fill="#1fae2c" stroke="#0c7a16" />
        <path d="M11 10.500v5l4-2.500z" fill="#fff" />
      </svg>
      Expert Advisors
    </button>
    <Grip />
    <Tool label="Bar chart">{axes}<path d="M10 3v9M8 10h2M10 4h3" stroke="#1f9a1f" strokeWidth="2" /></Tool>
    <Tool on label="Candlesticks">{axes}<path d="M10.500 1v12" stroke="#0a8a0a" /><path d="M8.500 3.500h4v7h-4z" fill="#2ad02a" stroke="#0a8a0a" /></Tool>
    <Tool label="Line chart">{axes}<path d="M4 12Q8 2 11 6t6 5" stroke="#3fa03f" /></Tool>
    <Sep />
    <Tool label="Zoom in">
      <path d="M12 11l4.500 5.500" stroke="#d0a020" strokeWidth="3" /><circle cx="8" cy="7" r="5.500" fill="#c4e2fa" stroke="#2878c0" /><path d="M5 7h6M8 4v6" stroke="#1860a8" strokeWidth="2" />
    </Tool>
    <Tool label="Zoom out">
      <path d="M12 11l4.500 5.500" stroke="#d0a020" strokeWidth="3" /><circle cx="8" cy="7" r="5.500" fill="#c4e2fa" stroke="#2878c0" /><path d="M5 7h6" stroke="#1860a8" strokeWidth="2" />
    </Tool>
    <Sep />
    <Tool on label="Auto scroll">{axes}<path d="M8 4v9l6-4.500z" fill="#2ac02a" stroke="#0a8a0a" /></Tool>
    <Tool on label="Chart shift">{axes}<path d="M10.500 2v11" stroke="#2468b0" /><path d="M17 8h-5M14 5.500L11.500 8l2.500 2.500" stroke="#d04010" /></Tool>
    <Sep />
    <div className="flex pl-1">
      <MenuTool label="Indicators">
        <path d="M1.500 1.500h7l3 3v10h-10z" fill="#fff" stroke="#6a6a6a" />
        <path d="M4 11q1 0 1-4t2-3M3 7h4" />
        {plus}
      </MenuTool>
      <MenuTool label="Periods">
        <circle cx="9" cy="9" r="7" fill="#e4f0fb" stroke="#2a6cc0" strokeWidth="2.500" />
        <path d="M9 5v4.500h3.500" stroke="#333" />
      </MenuTool>
      <MenuTool label="Templates">
        <path d="M1.500 2.500h15v13h-15z" fill="#fff" stroke="#2f6fb8" />
        <path d="M2 4h14M2 10h14" stroke="#4a8ad0" strokeWidth="2" />
        <path d="M3 8l3-2 3 1.500L14 6" stroke="#b02020" /><path d="M3 14l3-2 3 1.500 5-2" stroke="#1f9a1f" />
      </MenuTool>
    </div>
    <Sep />
    <Grip />
    {['M1', 'M5', 'M15', 'M30', 'H1', 'H4', 'D1', 'W1', 'MN'].map((period) => (
      <button key={period} className={`${period === 'H1' ? pressed : flat} text-[10px] text-[#505050]`}>{period}</button>
    ))}
    <Sep />
    <Grip />
    <Tool on label="Cursor"><path d="M6 1.500v12l3-3 2 5 2-1-2-4.500h4z" fill="#444" stroke="none" /></Tool>
    <Tool label="Crosshair"><path d="M9.500 2v6M9.500 11v6M2 9.500h6M11 9.500h6" /></Tool>
    <Sep />
    <Tool label="Vertical line"><path d="M9.500 3v13" /></Tool>
    <Tool label="Horizontal line"><path d="M3 9.500h12" /></Tool>
    <Tool label="Trendline"><path d="M3 15L14 3" /></Tool>
    <Tool label="Equidistant channel"><path d="M1 14L11 3M4 15L15 3M3 7l8 5M5 4l8 5M2 10l6 5" /><path d="M16.500 12.500h-3v5h3M13.500 15h3" /></Tool>
    <Tool label="Fibonacci retracement"><path d="M2 3.500h14M2 7.500h14M2 11.500h10" strokeDasharray="1 1" /><path d="M16.500 12.500h-3v5M13.500 15h3" /></Tool>
    <button className={`${flat} text-[12px] text-[#505050]`}>A</button>
    <Tool label="Text label"><path d="M3.500 3.500h11v12h-11z" strokeDasharray="1 1" /><path d="M6 6.500h6M9 6.500v8" strokeWidth="1.500" /></Tool>
    <MenuTool label="Arrows"><path d="M6 3l3 3H7v3H5V6H3zM12 15l-3-3h2V9h2v3h2z" fill="#444" stroke="#444" /></MenuTool>
    <Sep />
    <button className="mr-[2px] ml-auto flex h-6 w-[23px] flex-none items-center justify-center border border-[#b8b8b8] bg-[#e2e2e2]">
      <span className="flex h-[15px] w-[16px] items-center justify-center rounded-[2px] bg-[#4d79b6] text-[10px] font-bold text-white">4</span>
    </button>
  </div>
);

const TitleBar = () => (
  <div className="relative flex h-[22px] justify-between overflow-hidden border-b border-[#14181c] bg-[#0c1118]">
    {/* Desktop showing through the glass */}
    <svg className="absolute inset-0 h-full w-full" aria-hidden="true">
      <defs>
        <filter id="glass" x="-20%" y="-50%" width="140%" height="200%"><feGaussianBlur stdDeviation="2.500" /></filter>
        <filter id="glow" x="-20%" y="-100%" width="140%" height="300%"><feGaussianBlur stdDeviation="5" /></filter>
        <linearGradient id="sheen">
          <stop offset="0" stopColor="#3c3f42" /><stop offset=".15" stopColor="#14181c" /><stop offset=".5" stopColor="#0a0f16" />
          <stop offset=".8" stopColor="#15181a" /><stop offset=".95" stopColor="#0c1114" /><stop offset="1" stopColor="#50555a" />
        </linearGradient>
      </defs>
      <rect width="100%" height="22" fill="url(#sheen)" />
      <rect x="4" y="2" width="198" height="17" rx="8" fill="#b4b6b8" filter="url(#glow)" />
      <g filter="url(#glass)">
        <path d="M397 8h44v14h-44z" fill="#86b4dc" />
        <path d="M476 8h26l12 14h-38z" fill="#4763a8" />
        <path d="M630 7h32l-6 15h-20z" fill="#5b88ae" />
        <path d="M707 12h24l14 10h-38z" fill="#b4d8fa" />
        <path d="M926 18h32v4h-32z" fill="#6d7479" />
        <path d="M1004 16h40v6h-40z" fill="#454c4c" />
        <path d="M1240 9h18l12 13h-30z" fill="#a0cdfa" />
        <path d="M1155 18h40v4h-40z" fill="#223040" />
        <path d="M1466 6h32v16h-32z" fill="#9dbbd9" />
        <path d="M1612 17h44v5h-44z" fill="#587084" />
        <path d="M1691 8h14l18 14h-30z" fill="#8ba89c" />
        <path d="M1768 8h14l18 14h-30z" fill="#9fb8b8" />
      </g>
    </svg>
    <div className="relative flex items-center gap-1">
      <span className="flex h-[15px] w-[15px] items-center justify-center rounded-[2px] bg-[#1c1c1c] text-[8px] font-bold text-white">IB<i className="text-[#f0c020]">f</i></span>
      <h1 className="text-[12px] text-black">48544: IBFX MT4 - AUDUSDm,H1</h1>
    </div>
    <div className="relative mr-[3px] flex h-[18px] overflow-hidden rounded-b-[4px] border border-t-0 border-[#a9aeb3]">
      <button className="flex w-[28px] items-center justify-center border-r border-[#8a9096] bg-linear-to-b from-[#75797e] to-[#2e3338]" aria-label="Minimize">
        <span className="mt-1 h-[4px] w-[12px] border border-[#444] bg-white" />
      </button>
      <button className="flex w-[28px] items-center justify-center border-r border-[#8a9096] bg-linear-to-b from-[#75797e] to-[#2e3338]" aria-label="Restore">
        <svg width="12" height="12" viewBox="0 0 12 12" fill="none" stroke="#fff" strokeWidth="1.500"><path d="M4 3V1h7v7H9" /><path d="M1 4h7v7H1zM4 7h1v1H4z" /></svg>
      </button>
      <button className="flex w-[45px] items-center justify-center bg-linear-to-b from-[#e0907c] via-[#b82a14] to-[#d8503a]" aria-label="Close">
        <svg width="12" height="11" viewBox="0 0 12 11" stroke="#fff" strokeWidth="3"><path d="M2 1l8 9M10 1L2 10" /></svg>
      </button>
    </div>
  </div>
);

const OrderIcon = ({ sell }) => (
  <svg className="flex-none" width="15" height="16" viewBox="0 0 15 16">
    <path d="M1.500.5h7l3 3v11h-10z" fill="#fff" stroke="#555" />
    <path d="M8.500.5v3h3" fill="none" stroke="#555" />
    <circle cx="10.500" cy="12" r="3.500" fill={sell ? '#f04a1c' : '#22a4ee'} stroke={sell ? '#a82c08' : '#0e6cb0'} />
  </svg>
);

const OrderRow = ({ order, shaded }) => (
  <tr className={`h-5 ${shaded ? 'bg-[#ebebeb]' : 'bg-white'}`}>
    {order.map((cell, i) => (
      <td key={i} className="border-r border-b border-[#c6c6c6] p-0 pr-[2px] text-right last:border-r-0">
        {i === 0 ? (
          <span className="flex items-center gap-2 pl-[2px]"><OrderIcon sell={order[2] === 'sell'} />{cell}</span>
        ) : i === 11 ? (
          <span className="flex items-center justify-end gap-2 pr-2">
            {cell}
            <button aria-label={`Close order ${order[0]}`}><svg width="8" height="8" viewBox="0 0 8 8" stroke="#9a9a9a" strokeWidth="2"><path d="M1 1l6 6M7 1L1 7" /></svg></button>
          </span>
        ) : cell}
      </td>
    ))}
  </tr>
);

const Terminal = () => (
  <div className="mt-1 flex border-t border-[#a0a0a0] bg-[#f0f0f0]">
    <aside className="flex w-[15px] flex-none flex-col items-center">
      <button className="my-1 flex h-3 items-center" aria-label="Close terminal">
        <svg width="6" height="6" viewBox="0 0 6 6" stroke="#000" strokeWidth="1.500"><path d="M.5.5l5 5M5.500.5l-5 5" /></svg>
      </button>
      <div className="flex w-[12px] flex-1 rotate-180 items-center justify-start bg-linear-to-t from-[#dbe6f3] to-[#b4c6da] pt-1 text-[11px] leading-3 text-[#44505e] [writing-mode:vertical-rl]">Terminal</div>
    </aside>
    <div className="min-w-0 flex-1">
      <div className="flex border-b-2 border-l border-black border-l-[#808080] bg-white">
        <table className="w-full table-fixed border-separate border-spacing-0">
          <colgroup>
            {columns.map(([, width], i) => <col key={i} className={width} />)}
          </colgroup>
          <thead>
            <tr className="h-6 bg-linear-to-b from-white from-40% to-[#f2f4f7] to-45%">
              {columns.map(([name], i) => (
                <th key={i} className={`border-r border-b border-[#d5d9de] p-0 font-normal ${i === 0 ? 'pl-[6px] text-left' : 'pr-[5px] text-right'}`}>
                  {name}{i === 1 && <span className="pr-1 pl-3 text-[#808080]">/</span>}
                </th>
              ))}
            </tr>
          </thead>
          <tbody>
            {openOrders.map((order, i) => <OrderRow key={order[0]} order={order} shaded={i % 2 === 1} />)}
            <tr className="h-5 bg-[#c8c8c8] font-bold">
              <td colSpan={11} className="p-0">
                <span className="flex items-center gap-2 pl-[2px]">
                  <svg width="15" height="16" viewBox="0 0 15 16"><path d="M1.500 1.500h11v13h-11z" fill="#fff" stroke="#777" /><path d="M5.500 4h3v4H11l-4 4.500L3 8h2.500z" fill="#e8501c" stroke="#9a2c08" strokeWidth=".5" /></svg>
                  Balance: 1 784.78 USD&nbsp; Equity: 1 624.79&nbsp; Margin: 956.32&nbsp; Free margin: 668.47&nbsp; Margin level: 169.90%
                </span>
              </td>
              <td className="p-0 pr-[25px] text-right">-159.99</td>
            </tr>
            {pendingOrders.map((order, i) => <OrderRow key={order[0]} order={order} shaded={i % 2 === 1} />)}
          </tbody>
        </table>
        <div className="flex w-[21px] flex-none flex-col items-center justify-between bg-[#f0f0f0] py-2" aria-hidden="true">
          <svg width="7" height="4" viewBox="0 0 7 4"><path d="M0 4h7L3.500 0z" fill="#444" /></svg>
          <span className="mb-[56px] h-[15px] w-[14px] rounded-[2px] border border-[#949494] bg-linear-to-r from-white to-[#cfcfcf]" />
          <svg width="7" height="4" viewBox="0 0 7 4"><path d="M0 0h7L3.500 4z" fill="#444" /></svg>
        </div>
      </div>
      <div className="flex h-5 items-start text-[10px] text-[#787878]">
        <button className="-mt-[2px] ml-[3px] h-[19px] w-[48px] border border-t-0 border-black bg-white text-[11px] text-black shadow-[1px_1px_0_#000]">Trade</button>
        {[['Account History', 'w-[96px]'], ['News', 'w-[48px]'], ['Alerts', 'w-[46px]'], ['Mailbox', 'w-[57px]'], ['Code Base', 'w-[70px]'], ['Experts', 'w-[58px]']].map(([name, width]) => (
          <button key={name} className={`my-[2px] h-[13px] flex-none border-r border-[#808080] leading-[13px] ${width}`}>{name}</button>
        ))}
        <button className="ml-[8px] leading-[17px]">Jou</button>
        <span className="leading-[17px] whitespace-nowrap text-black">* Buy Limit = buy at market if touched, Sell Limit = sell at market if touched</span>
      </div>
    </div>
  </div>
);

export default function App() {
  const [activeTab, setActiveTab] = useState(4);

  return (
    <div className="flex min-h-screen flex-col bg-[#f0f0f0] font-['Noto_Sans',sans-serif] text-[11px] text-black">
      <TitleBar />
      <nav className="flex h-5 items-center gap-4 pl-[6px] text-[11px]">
        {['File', 'View', 'Insert', 'Charts', 'Tools', 'Window', 'Help'].map((item) => (
          <button key={item}>{item}</button>
        ))}
      </nav>
      <Toolbar />

      {/* Chart windows */}
      <main className="border-t border-b-2 border-[#6a6a6a] border-b-black bg-[#8d9299] pr-[2px] pb-px pl-[3px]">
        <div className="grid h-[375px] grid-cols-[503fr_476fr_458fr_478fr] items-end">
          <ChartWindow chart={charts.EURUSD} className="h-[374px]" />
          <ChartWindow chart={charts.EURJPY} className="h-[374px] self-start" />
          <ChartWindow chart={charts.AUDUSD} className="h-[374px]" active />
          <ChartWindow chart={charts.AUDJPY} className="h-[374px]" />
        </div>
        <div className="grid h-[376px] grid-cols-[482fr_476fr_385fr_572fr] items-end">
          <ChartWindow chart={charts.GBPUSD} className="h-[376px]" />
          <ChartWindow chart={charts.GBPJPY} className="h-[374px]" />
          <ChartWindow chart={charts.NZDUSD} className="h-[374px]" />
          <ChartWindow chart={charts.NZDJPY} className="h-[374px]">
            <ExposureTable />
          </ChartWindow>
        </div>
      </main>

      <div className="flex h-[21px] items-start overflow-hidden pl-1 text-[10px] text-[#787878]">
        {chartTabs.map(([name, width], i) => (
          <button
            key={i}
            onClick={() => setActiveTab(i)}
            className={`flex-none whitespace-nowrap ${width} ${
              i === activeTab
                ? 'h-[18px] border border-t-0 border-black bg-white text-black shadow-[1px_1px_0_#000]'
                : 'my-[3px] h-[13px] border-r border-[#808080] leading-[13px]'
            }`}
          >
            {name}
          </button>
        ))}
        <div className="mt-[6px] mr-[6px] ml-auto flex gap-3">
          <svg width="4" height="7" viewBox="0 0 4 7"><path d="M4 0v7L0 3.500z" fill="#888" /></svg>
          <svg width="4" height="7" viewBox="0 0 4 7"><path d="M0 0v7l4-3.500z" fill="#888" /></svg>
        </div>
      </div>

      <Terminal />

      <footer className="mt-auto flex h-[22px] items-center border-t border-[#a0a0a0] pt-[2px] pl-[2px]">
        <span className="flex-1">For Help, press F1</span>
        {[['1', 'w-[116px]'], ['2014.01.24 17:00', 'w-[102px]'], ['O: 0.87109', 'w-[71px]'], ['H: 0.87168', 'w-[71px]'], ['L: 0.87080', 'w-[69px]'], ['C: 0.87159', 'w-[69px]'], ['V: 2373', 'w-[66px]']].map(([text, width]) => (
          <span key={text} className={`flex-none border-l border-[#a0a0a0] pl-[5px] whitespace-nowrap ${width}`}>{text}</span>
        ))}
        <span className="flex w-[162px] flex-none items-center border-l border-[#a0a0a0] pl-1">
          <svg width="24" height="12" viewBox="0 0 24 12">
            {[0, 1, 2, 3, 4, 5, 6, 7].map((i) => (
              <g key={i}>
                <rect x={i * 3} y="0" width="2" height={10 - i} fill="#5a7a1c" />
                <rect x={i * 3} y={11 - i} width="2" height={i + 1} fill="#8a1c10" />
              </g>
            ))}
          </svg>
          <span className="mr-[41px] ml-auto">2044/4 kb</span>
        </span>
      </footer>
    </div>
  );
}
